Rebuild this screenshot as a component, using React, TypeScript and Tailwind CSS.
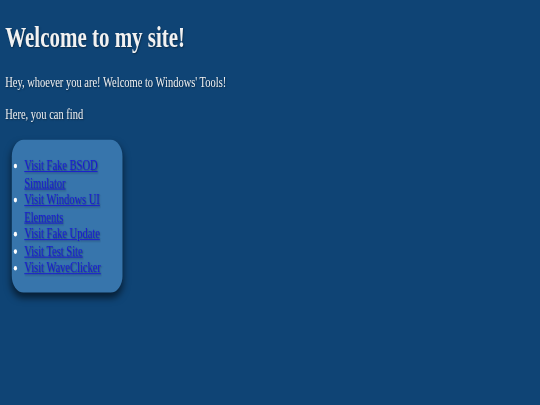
import React from 'react';

const links = [
  'Visit Fake BSOD Simulator',
  'Visit Windows UI Elements',
  'Visit Fake Update',
  'Visit Test Site',
  'Visit WaveClicker',
];

export default function App() {
  return (
    <div className="w-full h-screen overflow-hidden bg-[#0f4475] text-[#f2f2f2] font-['Liberation_Serif','Times_New_Roman',serif]">
      {/* the shot is squeezed sideways, so the page is drawn wide and scaled */}
      <div className="w-[830px] origin-top-left scale-x-[0.655] scale-y-[0.92] px-2 pt-px [text-shadow:1px_1px_2px_rgba(0,0,0,0.4)]">
        <h1 className="text-[32px] leading-[36.8px] font-bold my-[21.44px]">Welcome to my site!</h1>
        <p className="text-base leading-[18.4px] my-4">Hey, whoever you are! Welcome to Windows' Tools!</p>
        <p className="text-base leading-[18.4px] my-4">Here, you can find</p>
        <div className="ml-[10px] mt-[19px] w-[169px] rounded-[18px] bg-[#3775ac] pt-[19px] pb-[18px] pr-2 shadow-[0_5px_10px_rgba(0,0,0,0.55)]">
          <ul className="list-disc pl-[19px] text-base leading-[18.4px] marker:text-white">
            {links.map(l => (
              <li key={l}>
                <a href="#" className="text-[#1a1ad4] underline">{l}</a>
              </li>
            ))}
          </ul>
        </div>
      </div>
    </div>
  );
}
